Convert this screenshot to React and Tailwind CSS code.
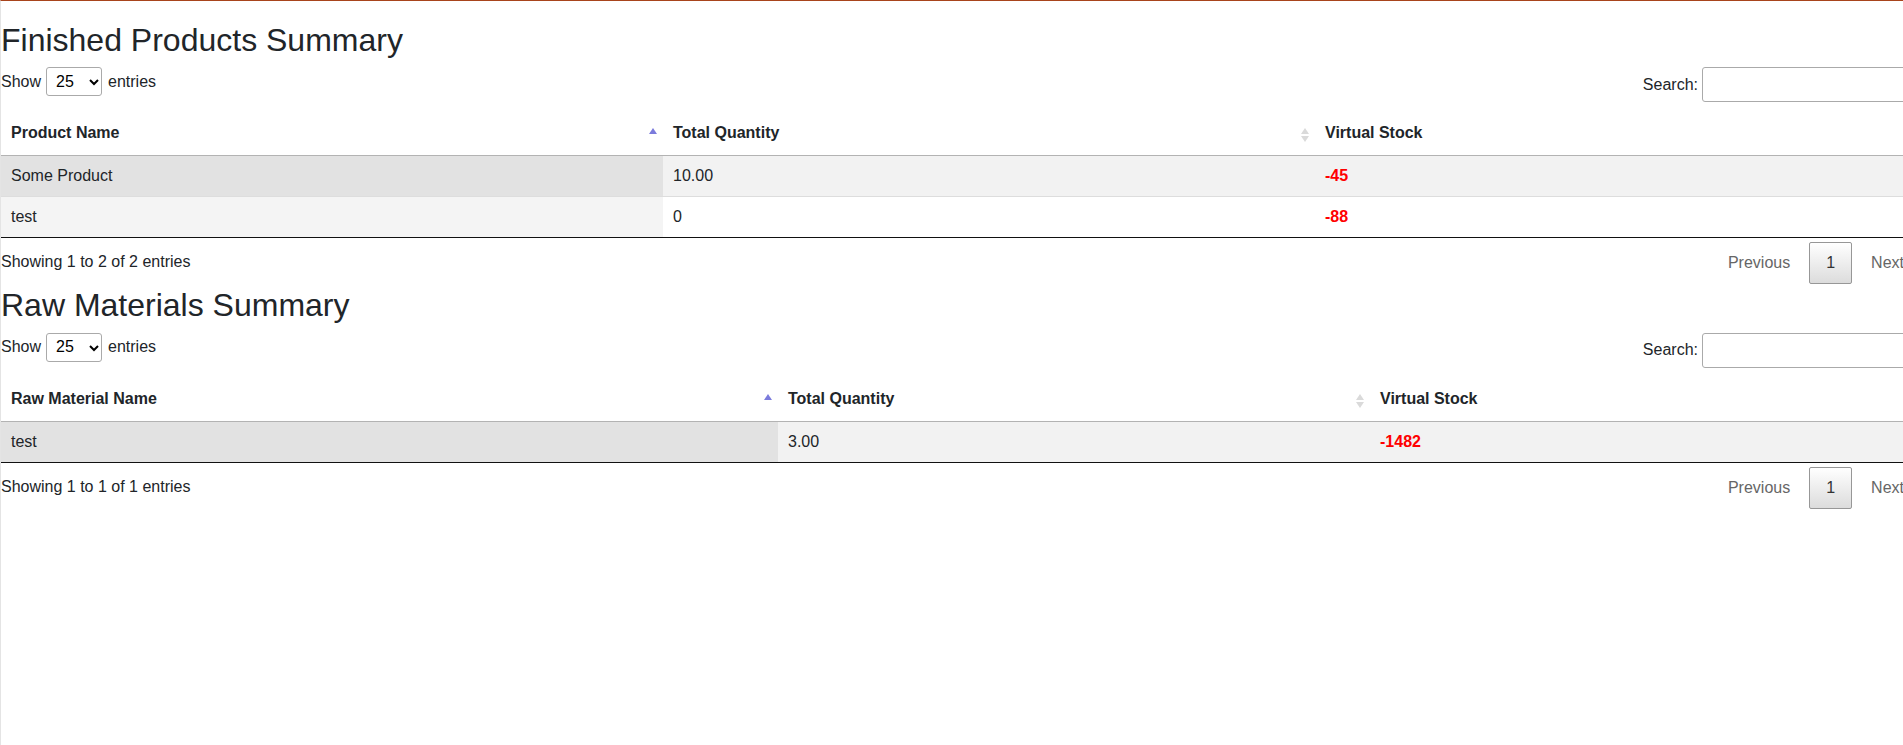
import React from "react";

const products = [
  { name: "Some Product", qty: "10.00", stock: "-45" },
  { name: "test", qty: "0", stock: "-88" },
];

const materials = [{ name: "test", qty: "3.00", stock: "-1482" }];

// little ▲▼ pair DataTables puts at the right of a header cell
const SortIcon = ({ active }) => (
  <svg className="absolute right-[6px] top-[17px]" width="8" height="14" viewBox="0 0 8 14">
    <path d="M0 6 L4 0 L8 6 Z" fill={active ? "#7b7bdc" : "#dadada"} />
    {!active && <path d="M0 8 L8 8 L4 14 Z" fill="#dadada" />}
  </svg>
);

const Controls = () => (
  <div className="flex items-start justify-between">
    <div className="flex items-center h-[29px] gap-[5px]">
      <span>Show</span>
      <div className="relative">
        <select
          defaultValue="25"
          className="appearance-none w-[56px] h-[29px] border border-[#aaa] rounded-[3px] bg-white pl-[9px] text-[16px] leading-6 text-black"
        >
          <option value="10">10</option>
          <option value="25">25</option>
          <option value="50">50</option>
          <option value="100">100</option>
        </select>
        <svg className="absolute left-[43px] top-[12px] pointer-events-none" width="10" height="7" viewBox="0 0 10 7">
          <path d="M1 1 L5 5 L9 1" fill="none" stroke="#000" strokeWidth="2" />
        </svg>
      </div>
      <span className="ml-[1px]">entries</span>
    </div>
    <div className="flex items-center gap-[4px]">
      <label>Search:</label>
      <input
        type="search"
        className="w-[219px] h-[35px] border border-[#aaa] rounded-[3px] bg-transparent px-[5px] outline-none"
      />
    </div>
  </div>
);

const Pagination = () => (
  <div className="flex gap-[2px] pt-1">
    <span className="px-4 py-2 border border-transparent leading-6 text-[#666]">Previous</span>
    <span className="px-4 py-2 border border-[#979797] rounded-[2px] leading-6 text-[#333] bg-gradient-to-b from-white to-[#dcdcdc]">
      1
    </span>
    <span className="px-4 py-2 border border-transparent leading-6 text-[#666]">Next</span>
  </div>
);

const SummaryTable = ({ title, firstLabel, widths, rows, info, mt, pb }) => (
  <div className={pb}>
    <h2 className="text-[32px] leading-[1.2] font-normal mb-2">{title}</h2>
    <Controls />
    <table className={`w-full table-fixed border-separate border-spacing-0 border-b border-[#111] ${mt}`}>
      <thead>
        <tr>
          <th className={`relative ${widths[0]} text-left font-bold leading-6 pt-[10px] pb-[10px] pl-[10px] pr-[18px] border-b border-[#b3b3b3]`}>
            {firstLabel}
            <SortIcon active />
          </th>
          <th className={`relative ${widths[1]} text-left font-bold leading-6 pt-[10px] pb-[10px] pl-[10px] pr-[18px] border-b border-[#b3b3b3]`}>
            Total Quantity
            <SortIcon />
          </th>
          <th className="text-left font-bold leading-6 pt-[10px] pb-[10px] pl-[10px] pr-[18px] border-b border-[#b3b3b3]">
            Virtual Stock
          </th>
        </tr>
      </thead>
      <tbody>
        {rows.map((r, i) => {
          const odd = i % 2 === 0;
          const line = i > 0 ? "border-t border-[#ddd]" : "";
          return (
            <tr key={i}>
              <td className={`px-[10px] py-2 leading-6 ${line} ${odd ? "bg-[#e2e2e2]" : "bg-[#f4f4f4]"}`}>{r.name}</td>
              <td className={`px-[10px] py-2 leading-6 ${line} ${odd ? "bg-[#f2f2f2]" : "bg-white"}`}>{r.qty}</td>
              <td className={`px-[10px] py-2 leading-6 font-bold text-[#ff0000] ${line} ${odd ? "bg-[#f2f2f2]" : "bg-white"}`}>
                {r.stock}
              </td>
            </tr>
          );
        })}
      </tbody>
    </table>
    <div className="flex items-start justify-between">
      <div className="pt-[12px] leading-6">{info}</div>
      <Pagination />
    </div>
  </div>
);

export default function App() {
  return (
    <div
      className="min-h-screen overflow-hidden bg-white border-t border-l border-t-[#a8441c] border-l-[#e4e4e4] text-[16px] text-[#212529]"
      style={{ fontFamily: '"Liberation Sans", Arial, sans-serif' }}
    >
      <div className="w-[1920px] pt-5">
        <SummaryTable
          title="Finished Products Summary"
          firstLabel="Product Name"
          widths={["w-[662px]", "w-[652px]"]}
          rows={products}
          info="Showing 1 to 2 of 2 entries"
          mt="mt-[9px]"
          pb="pb-[2px]"
        />
        <SummaryTable
          title="Raw Materials Summary"
          firstLabel="Raw Material Name"
          widths={["w-[777px]", "w-[592px]"]}
          rows={materials}
          info="Showing 1 to 1 of 1 entries"
          mt="mt-[9px]"
          pb=""
        />
      </div>
    </div>
  );
}
